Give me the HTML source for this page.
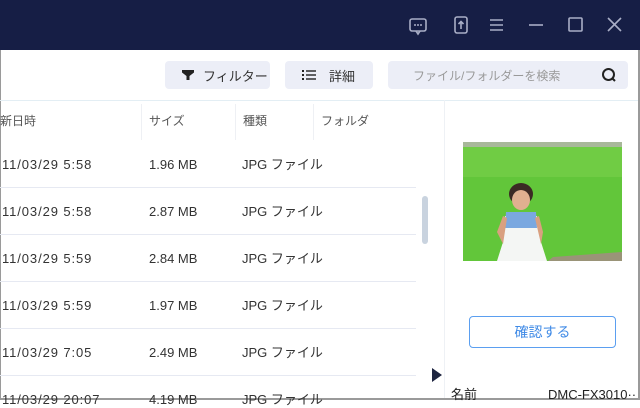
<!DOCTYPE html>
<html><head><meta charset="utf-8">
<style>
*{margin:0;padding:0;box-sizing:border-box}
body{width:640px;height:400px;overflow:hidden;background:#fff;font-family:"Liberation Sans","Noto Sans CJK JP",sans-serif;position:relative;color:#333}
.a{position:absolute}
.title{left:0;top:0;width:640px;height:50px;background:#161e45}
.btn{background:#eceef7;border-radius:4px;height:28px;top:61px;font-size:13px;color:#333;display:flex;align-items:center}
.hdr{font-size:12px;color:#555;top:113px;line-height:16px}
.cell{font-size:13px;color:#333;line-height:16px}
.d{letter-spacing:0.9px}
.line{height:1px;background:#e6e9f2;left:0;width:416px}
.vsep{width:1px;top:104px;height:36px;background:#eef0f4}
</style></head><body>
<div class="a title"></div>
<svg class="a" style="left:405px;top:12px" width="230" height="28" viewBox="0 0 230 28">
 <g fill="none" stroke="#a9aec6" stroke-width="1.6">
  <rect x="5" y="7" width="16" height="12" rx="2"/>
  <path d="M11 19 L13 22 L15 19"/>
  <rect x="50" y="5" width="12" height="16" rx="2"/>
  <path d="M56 17 V10 M53.5 12 L56 9.5 L58.5 12"/>
  <path d="M85 8 H98 M85 13 H98 M85 18 H98"/>
  <path d="M124 13 H138"/>
  <rect x="164" y="6" width="13" height="13" rx="1"/>
  <path d="M203 6 L216 19 M216 6 L203 19"/>
 </g>
 <g fill="#a9aec6"><circle cx="10" cy="13" r="1"/><circle cx="13" cy="13" r="1"/><circle cx="16" cy="13" r="1"/></g>
</svg>
<div class="a" style="left:0;top:50px;width:1px;height:350px;background:#9a9a9a"></div>
<div class="a" style="left:638px;top:50px;width:2px;height:350px;background:#9a9a9a"></div>
<div class="a" style="left:0;top:398px;width:640px;height:2px;background:#9a9a9a"></div>

<div class="a btn" style="left:165px;width:105px"><svg style="margin-left:17px;margin-right:9px" width="12" height="12" viewBox="0 0 12 12"><path d="M0 1 H12 V3.5 L7.5 7 V11 H4.5 V7 L0 3.5Z" fill="#222"/></svg>フィルター</div>
<div class="a btn" style="left:285px;width:88px"><svg style="margin-left:17px;margin-right:13px" width="14" height="12" viewBox="0 0 14 12"><g fill="#222"><rect x="0" y="1" width="2" height="2"/><rect x="0" y="5" width="2" height="2"/><rect x="0" y="9" width="2" height="2"/><rect x="4" y="1.3" width="10" height="1.4"/><rect x="4" y="5.3" width="10" height="1.4"/><rect x="4" y="9.3" width="10" height="1.4"/></g></svg>詳細</div>
<div class="a btn" style="left:388px;width:240px;background:#eceef7;color:#999;font-size:12px"><span style="margin-left:25px">ファイル/フォルダーを検索</span>
<svg class="a" style="left:213px;top:6px" width="16" height="16" viewBox="0 0 16 16"><circle cx="7.5" cy="7.5" r="5.5" fill="none" stroke="#222" stroke-width="2"/><path d="M11.5 11.5 L14 14" stroke="#222" stroke-width="2"/></svg></div>

<div class="a" style="left:0;top:100px;width:638px;height:1px;background:#e3eef4"></div>
<div class="a" style="left:444px;top:100px;width:1px;height:298px;background:#eef1f5"></div>
<div class="a vsep" style="left:141px"></div>
<div class="a vsep" style="left:235px"></div>
<div class="a vsep" style="left:313px"></div>
<div class="a hdr" style="left:0">新日時</div>
<div class="a hdr" style="left:149px">サイズ</div>
<div class="a hdr" style="left:243px">種類</div>
<div class="a hdr" style="left:321px">フォルダ</div>

<div class="a cell d" style="left:2px;top:157px">11/03/29 5:58</div><div class="a cell" style="left:149px;top:157px">1.96 MB</div><div class="a cell" style="left:242px;top:157px">JPG ファイル</div>
<div class="a line" style="top:187px"></div>
<div class="a cell d" style="left:2px;top:204px">11/03/29 5:58</div><div class="a cell" style="left:149px;top:204px">2.87 MB</div><div class="a cell" style="left:242px;top:204px">JPG ファイル</div>
<div class="a line" style="top:234px"></div>
<div class="a cell d" style="left:2px;top:251px">11/03/29 5:59</div><div class="a cell" style="left:149px;top:251px">2.84 MB</div><div class="a cell" style="left:242px;top:251px">JPG ファイル</div>
<div class="a line" style="top:281px"></div>
<div class="a cell d" style="left:2px;top:298px">11/03/29 5:59</div><div class="a cell" style="left:149px;top:298px">1.97 MB</div><div class="a cell" style="left:242px;top:298px">JPG ファイル</div>
<div class="a line" style="top:328px"></div>
<div class="a cell d" style="left:2px;top:345px">11/03/29 7:05</div><div class="a cell" style="left:149px;top:345px">2.49 MB</div><div class="a cell" style="left:242px;top:345px">JPG ファイル</div>
<div class="a line" style="top:375px"></div>
<div class="a cell d" style="left:2px;top:392px">11/03/29 20:07</div><div class="a cell" style="left:149px;top:392px">4.19 MB</div><div class="a cell" style="left:242px;top:392px">JPG ファイル</div>

<div class="a" style="left:422px;top:196px;width:6px;height:48px;background:#c9d3df;border-radius:3px"></div>

<svg class="a" style="left:463px;top:142px" width="159" height="119" viewBox="0 0 159 119">
 <rect width="159" height="119" fill="#62c63a"/>
 <rect width="159" height="5" fill="#a8b89a"/>
 <path d="M95 8 L159 28 L159 32 L105 12Z" fill="#dfeed6"/>
 <rect x="0" y="5" width="159" height="30" fill="#70cc44"/>
 <path d="M90 115 L159 110 L159 119 L85 119Z" fill="#9a9478"/>
 <ellipse cx="58" cy="52" rx="12" ry="11" fill="#3b2a24"/>
 <ellipse cx="58" cy="58" rx="9" ry="10" fill="#e0b090"/>
 <path d="M42 74 L74 74 L78 100 L84 119 L34 119 L40 100Z" fill="#f4f6f4"/>
 <path d="M43 70 L73 70 L74 86 L42 86Z" fill="#7aa8e0"/>
 <path d="M34 90 L40 74 L44 76 L40 102Z M80 90 L76 74 L72 76 L78 102Z" fill="#d9a080"/>
</svg>

<div class="a" style="left:469px;top:316px;width:147px;height:32px;border:1px solid #5b9ff0;border-radius:4px;color:#3f8ae6;font-size:14px;text-align:center;line-height:30px">確認する</div>
<svg class="a" style="left:431px;top:368px" width="12" height="14" viewBox="0 0 12 14"><path d="M1 0 L11 7 L1 14Z" fill="#1e2540"/></svg>
<div class="a" style="left:451px;top:387px;font-size:13px;color:#222;line-height:16px">名前</div>
<div class="a" style="left:548px;top:387px;font-size:13px;color:#222;line-height:16px">DMC-FX3010··</div>
</body></html>
